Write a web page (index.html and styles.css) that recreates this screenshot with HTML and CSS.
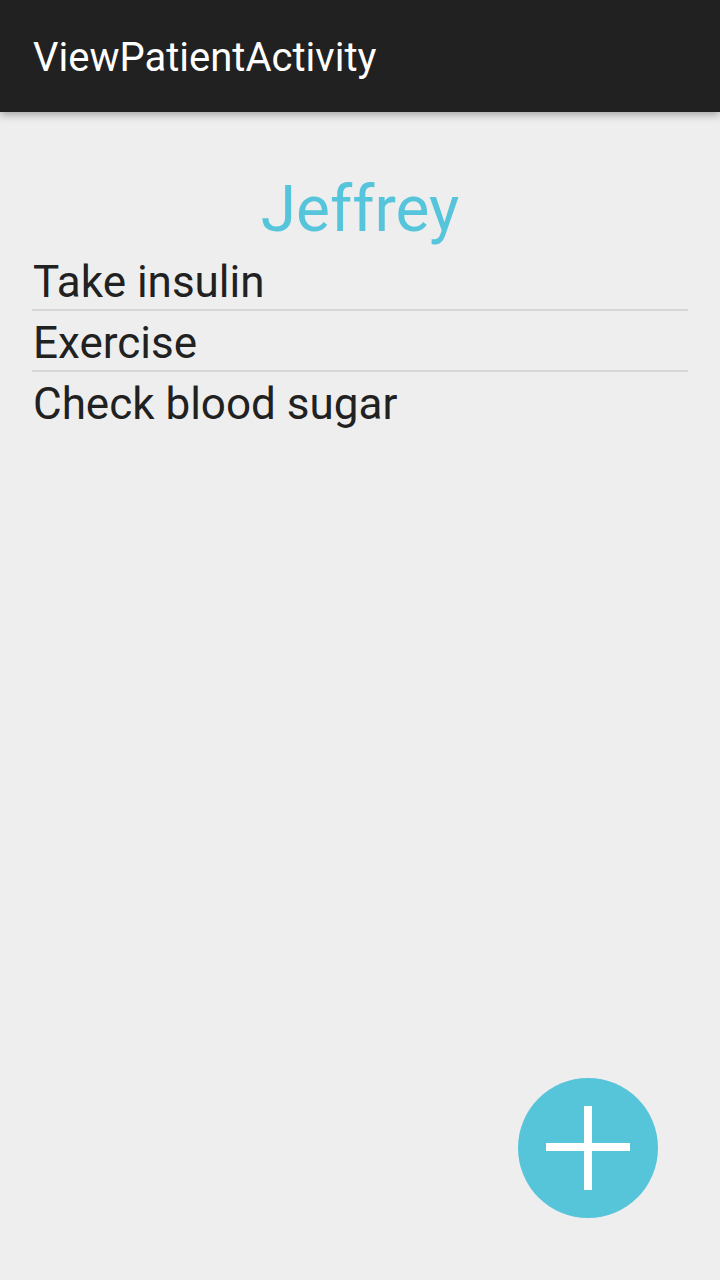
FILE: index.html
```html
<!DOCTYPE html>
<html lang="en">
<head>
  <meta charset="UTF-8">
  <meta name="viewport" content="width=device-width, initial-scale=1.0">
  <title>ViewPatientActivity</title>

  <link rel="stylesheet" href="styles.css">
</head>
<body>

  <header class="app-bar">
    <h1 class="app-title">ViewPatientActivity</h1>
  </header>

  <main class="content">
    <h2 class="patient-name">Jeffrey</h2>
    <ul class="task-list">
      <li class="task-item">Take insulin</li>
      <li class="task-item">Exercise</li>
      <li class="task-item">Check blood sugar</li>
    </ul>
  </main>

  <button class="fab" type="button" aria-label="Add task">
    <svg width="84" height="84" viewBox="0 0 84 84">
      <rect x="38" y="0" width="8" height="84" fill="#fff"/>
      <rect x="0" y="37" width="84" height="8" fill="#fff"/>
    </svg>
  </button>

</body>
</html>
```

FILE: styles.css
```css
body {
  font-family: Roboto, "Noto Sans", Arial, sans-serif;
  margin: 0;
  padding: 0;
  background-color: #eeeeee;
  color: #212121;
  height: 1280px;
  overflow: hidden;
}

.app-bar {
  background-color: #212121;
  height: 112px;
  display: flex;
  align-items: center;
  padding: 2px 33px 0;
  box-sizing: border-box;
  box-shadow: 0 3px 8px rgba(0, 0, 0, 0.3);
  position: relative;
}

.app-title {
  margin: 0;
  color: #ffffff;
  font-size: 40px;
  font-weight: 400;
}

.content {
  padding: 58px 32px 0;
}

.patient-name {
  margin: 0;
  text-align: center;
  color: #56c5db;
  font-size: 64px;
  font-weight: 400;
  line-height: 80px;
}

.task-list {
  list-style: none;
  margin: 0;
  padding: 0;
}

.task-item {
  font-size: 44px;
  line-height: 54px;
  padding-top: 5px;
  padding-left: 1px;
  border-bottom: 2px solid #d6d6d6;
}

.task-item:last-child {
  border-bottom: none;
}

.fab {
  position: absolute;
  right: 62px;
  bottom: 62px;
  width: 140px;
  height: 140px;
  border-radius: 50%;
  border: none;
  padding: 0;
  background-color: #56c5da;
  display: flex;
  align-items: center;
  justify-content: center;
  cursor: pointer;
}
```
